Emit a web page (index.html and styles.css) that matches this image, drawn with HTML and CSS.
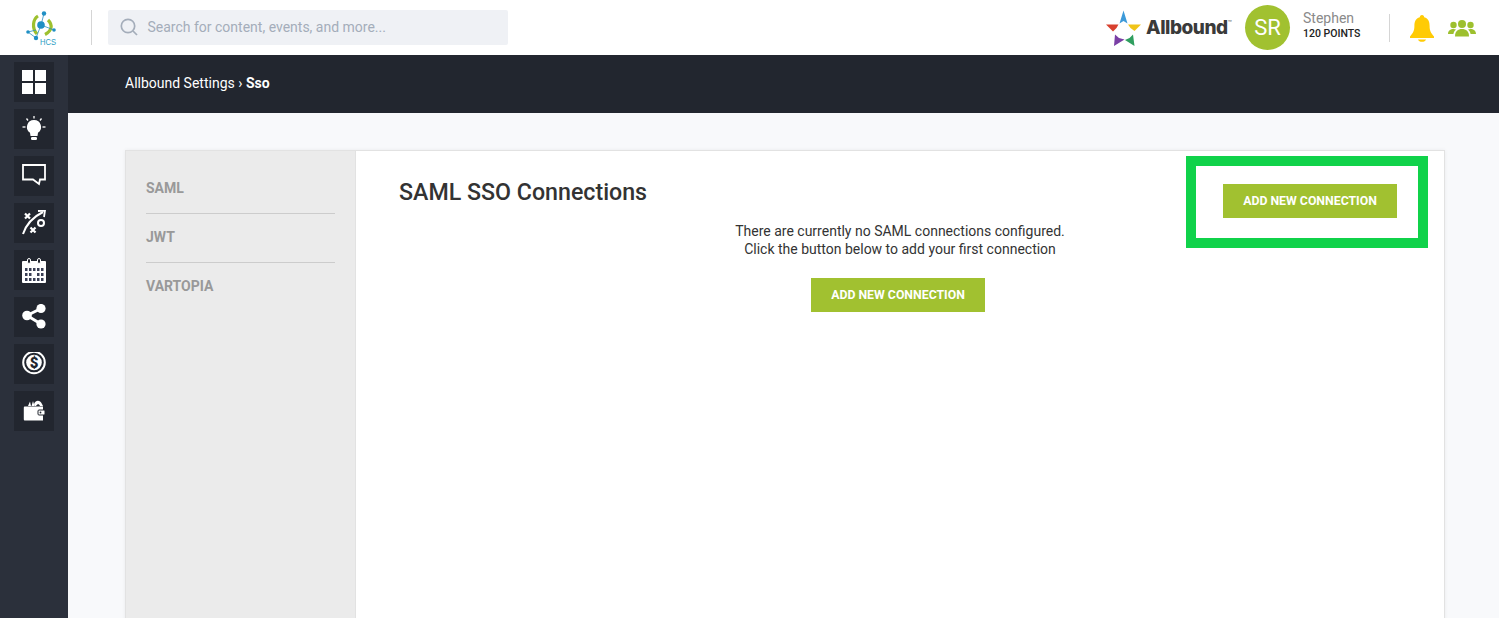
FILE: index.html
```html
<!DOCTYPE html>
<html lang="en">
<head>
<meta charset="utf-8">
<title>Allbound Settings - Sso</title>
<link rel="stylesheet" href="styles.css">
</head>
<body>
<header class="topbar">
  <div class="logo">
    <svg width="36" height="40" viewBox="0 -2 36 40">
      <path d="M13 6 C8 9 6.500 18 12 24" fill="none" stroke="#9dc02e" stroke-width="3.200"/>
      <path d="M23 10 C28 15 27 21 20 24.500" fill="none" stroke="#9dc02e" stroke-width="3.200"/>
      <g stroke="#2a8fc0" stroke-width="0.800" fill="#1f8fc4">
        <line x1="16" y1="15" x2="19" y2="3.500"/><line x1="16" y1="15" x2="29" y2="20"/><line x1="3" y1="22" x2="11" y2="28"/><line x1="11" y1="28" x2="16" y2="15"/><line x1="3" y1="22" x2="11" y2="20"/>
        <circle cx="16" cy="15" r="3.800" stroke="none"/><circle cx="19" cy="3.500" r="2.200" stroke="none"/><circle cx="3" cy="22" r="1.800" stroke="none"/><circle cx="29" cy="20" r="1.800" stroke="none"/><circle cx="11" cy="28" r="2.200" stroke="none"/>
      </g>
      <text x="15" y="35" class="logo-text" textLength="16" lengthAdjust="spacingAndGlyphs">HCS</text>
    </svg>
  </div>
  <div class="divider"></div>
  <div class="search">
    <svg width="20" height="20" viewBox="0 0 20 20" fill="none" stroke="#a4adba" stroke-width="1.700">
      <circle cx="9" cy="9" r="6.700"/><line x1="14" y1="14" x2="18" y2="18"/>
    </svg>
    <span>Search for content, events, and more...</span>
  </div>
  <div class="top-right">
    <div class="brand">
      <svg width="36" height="36" viewBox="0 0 36 36">
        <path d="M17.500 0.500 L21.500 13.500 L17.500 11 L13.500 13.500 Z" fill="#3d9ad9"/>
        <path d="M0 14.500 L12.500 14.500 L10.500 18 L7 21.500 Z" fill="#d8402e"/>
        <path d="M35 14.500 L22 14.500 L24.500 18 L28.500 21 Z" fill="#f0c419"/>
        <path d="M8 36 L9 24.500 L13 28 L18.500 29.500 Z" fill="#7a3fa5"/>
        <path d="M28.500 36 L27 24.500 L23.500 28 L19 30 Z" fill="#2f9e5f"/>
      </svg>
      <span class="brand-name">Allbound</span><span class="tm">™</span>
    </div>
    <div class="avatar">SR</div>
    <div class="user">
      <span class="user-name">Stephen</span>
      <span class="user-points">120 POINTS</span>
    </div>
    <div class="divider divider-short"></div>
    <svg class="bell" width="26" height="28" viewBox="0 0 26 28" fill="#ffcb05">
      <path d="M13 1 C14.500 1 15.200 2 15.200 3.300 C19.500 4.500 20.600 8 20.600 12 C20.600 17 22 19 25 22.500 L25 24 L1 24 L1 22.500 C4 19 5.400 17 5.400 12 C5.400 8 6.500 4.500 10.800 3.300 C10.800 2 11.500 1 13 1 Z"/>
      <path d="M9 25.500 L17 25.500 C16.500 27.300 15 27.800 13 27.800 C11 27.800 9.500 27.300 9 25.500 Z"/>
    </svg>
    <svg class="people" width="28" height="18" viewBox="0 0 28 18" fill="#9dc02e">
      <circle cx="14" cy="5" r="4"/><circle cx="5.500" cy="6" r="3.200"/><circle cx="22.500" cy="6" r="3.200"/>
      <path d="M7 17.500 C7 12 10 10 14 10 C18 10 21 12 21 17.500 Z"/>
      <path d="M0 15 C0 11.500 2.500 10 5.500 10 C6.500 10 7.300 10.200 8 10.500 C6.500 11.800 5.700 13 5.400 15 Z"/>
      <path d="M28 15 C28 11.500 25.500 10 22.500 10 C21.500 10 20.700 10.200 20 10.500 C21.500 11.800 22.300 13 22.600 15 Z"/>
    </svg>
  </div>
</header>

<div class="shell">
  <nav class="rail">
    <a class="tile"><svg width="24" height="24" viewBox="0 0 24 24" fill="#fff"><rect width="11" height="11"/><rect x="13" width="11" height="11"/><rect y="13" width="11" height="11"/><rect x="13" y="13" width="11" height="11"/></svg></a>
    <a class="tile"><svg width="24" height="26" viewBox="0 0 24 26"><path d="M12 4 A7 7 0 0 1 16 16.800 L15.500 20 L8.500 20 L8 16.800 A7 7 0 0 1 12 4 Z" fill="#fff"/><rect x="9" y="21" width="6" height="3" rx="1.200" fill="#fff"/><g stroke="#fff" stroke-width="1.300"><line x1="12" y1="0" x2="12" y2="2.500"/><line x1="4.500" y1="2.500" x2="6" y2="4.500"/><line x1="19.500" y1="2.500" x2="18" y2="4.500"/><line x1="0.500" y1="11" x2="3.500" y2="11"/><line x1="20.500" y1="11" x2="23.500" y2="11"/></g></svg></a>
    <a class="tile"><svg width="24" height="24" viewBox="0 0 24 24" fill="none" stroke="#fff" stroke-width="1.800"><path d="M1 1 H23 V15.500 H18 L17 20 L11 15.500 H1 Z"/></svg></a>
    <a class="tile"><svg width="24" height="26" viewBox="0 0 24 26" fill="none" stroke="#fff" stroke-width="2"><path d="M1 24 C4 15 11 7 21 2"/><path d="M16 1 L23 0.500 L22 7" stroke-width="1.800"/><circle cx="19" cy="13" r="3"/><path d="M3 3.500 L8 8.500 M8 3.500 L3 8.500 M8.500 17.500 L13.500 22.500 M13.500 17.500 L8.500 22.500" stroke-width="2.200"/></svg></a>
    <a class="tile"><svg width="24" height="25" viewBox="0 0 24 25"><rect y="3" width="24" height="22" rx="1" fill="#fff"/><g fill="#3a3f55"><rect x="3" y="10" width="2.500" height="3"/><rect x="7" y="10" width="2.500" height="3"/><rect x="11" y="10" width="2.500" height="3"/><rect x="15" y="10" width="2.500" height="3"/><rect x="19" y="10" width="2.500" height="3"/><rect x="3" y="15" width="2.500" height="3"/><rect x="7" y="15" width="2.500" height="3"/><rect x="15" y="15" width="2.500" height="3"/><rect x="19" y="15" width="2.500" height="3"/><rect x="3" y="20" width="2.500" height="3"/><rect x="7" y="20" width="2.500" height="3"/><rect x="11" y="20" width="2.500" height="3"/><rect x="15" y="20" width="2.500" height="3"/><rect x="19" y="20" width="2.500" height="3"/></g><g fill="#22262f" stroke="#fff" stroke-width="1"><rect x="5.500" y="0.500" width="3" height="5" rx="1.500"/><rect x="15.500" y="0.500" width="3" height="5" rx="1.500"/></g></svg></a>
    <a class="tile"><svg width="24" height="26" viewBox="0 0 24 26" fill="#fff"><circle cx="5" cy="11.500" r="4.800"/><circle cx="19" cy="4.500" r="4.600"/><circle cx="19" cy="20" r="4.600"/><path d="M5 11.500 L19 4.500 M5 11.500 L19 20" stroke="#fff" stroke-width="3"/></svg></a>
    <a class="tile"><svg width="24" height="24" viewBox="0 0 24 24" fill="none"><circle cx="12" cy="10.500" r="10.800" stroke="#fff" stroke-width="2"/><circle cx="12" cy="10.500" r="7.800" fill="#fff"/><text x="12" y="15.800" class="dollar">$</text></svg></a>
    <a class="tile"><svg width="22" height="22" viewBox="0 0 22 22"><path d="M5 6 L7 1.500 L8 6 Z M8.500 6 L10 1 L11.500 6 Z" fill="#fff"/><path d="M11 4 C13 -0.500 17 0 19 4 L20 6 L17 6 C16 3.500 14.500 3.500 13 6 L11.500 6 Z" fill="#fff"/><path d="M2 6.500 H20 V20.500 H2 C1.200 20.500 0.800 20 0.800 19.200 V7.800 C0.800 7 1.200 6.500 2 6.500 Z" fill="#fff"/><rect x="15" y="10" width="7" height="5" rx="1" fill="#fff" stroke="#22262f" stroke-width="1"/><circle cx="17.500" cy="12.500" r="0.900" fill="#22262f"/></svg></a>
  </nav>

  <main class="main">
    <div class="crumbs">Allbound Settings › <strong>Sso</strong></div>
    <div class="page">
      <section class="card">
        <aside class="tabs">
          <a class="tab">SAML</a>
          <a class="tab">JWT</a>
          <a class="tab">VARTOPIA</a>
        </aside>
        <div class="panel">
          <div class="panel-head">
            <h1>SAML SSO Connections</h1>
            <button class="btn" type="button">ADD NEW CONNECTION</button>
          </div>
          <div class="empty">
            <p>There are currently no SAML connections configured.<br>Click the button below to add your first connection</p>
            <button class="btn" type="button">ADD NEW CONNECTION</button>
          </div>
          <div class="highlight"></div>
        </div>
      </section>
    </div>
  </main>
</div>
</body>
</html>
```

FILE: styles.css
```css
* { box-sizing: border-box; }
html, body { margin: 0; height: 100%; overflow: hidden; }
body { font-family: Roboto, "Liberation Sans", sans-serif; background: #f8f9fb; color: #333; }

.topbar { height: 55px; background: #fff; display: flex; align-items: center; padding-left: 25px; }
.logo { width: 36px; height: 40px; margin-right: 30px; }
.logo svg { display: block; }
.logo-text { font-family: "Liberation Sans", sans-serif; font-size: 9.500px; fill: #2a9dc4; }
.divider { width: 1px; height: 35px; background: #d5d5d5; flex: none; }
.search { width: 400px; height: 35px; margin-left: 16px; background: #eff1f5; border-radius: 2px; display: flex; align-items: center; gap: 8.500px; padding: 0 0 2px 11px; color: #a4adba; font-size: 14px; }
.top-right { margin-left: auto; display: flex; align-items: center; padding-right: 23px; }
.brand { display: flex; align-items: center; margin-right: 13px; }
.brand svg { margin-right: 4px; }
.brand-name { font-family: Inter, "Liberation Sans", sans-serif; font-weight: 800; font-size: 19px; letter-spacing: -0.500px; color: #3a3a3a; }
.tm { font-size: 7px; color: #555; align-self: flex-start; margin-top: 9px; }
.avatar { width: 45px; height: 45px; border-radius: 50%; background: #a1c130; color: #fff; font-size: 22px; display: flex; align-items: center; justify-content: center; margin-right: 13px; }
.user { width: 86px; display: flex; flex-direction: column; margin-top: -6px; }
.user-name { font-size: 14px; line-height: 17px; color: #8a8a8a; }
.user-points { font-size: 10.500px; line-height: 13px; font-weight: 500; color: #222; }
.divider-short { height: 28px; }
.bell { margin-left: 19px; }
.people { margin-left: 13px; }

.shell { display: flex; height: 563px; }
.rail { width: 68px; flex: none; background: #2b303b; padding: 7px 0 0 14px; display: flex; flex-direction: column; gap: 7px; }
.tile { width: 40px; height: 40px; background: #22262f; display: flex; align-items: center; justify-content: center; }
.dollar { font-family: Roboto, sans-serif; font-size: 15px; font-weight: 900; fill: #22262f; text-anchor: middle; }

.main { flex: 1; min-width: 0; display: flex; flex-direction: column; }
.crumbs { height: 58px; flex: none; background: #22262f; color: #fff; font-size: 14px; display: flex; align-items: center; padding: 0 0 2px 57px; white-space: pre; }
.crumbs strong { font-weight: 700; }
.page { flex: 1; padding: 37px 54px 0 57px; min-height: 0; }
.card { height: 100%; min-height: 480px; display: flex; background: #fff; border: 1px solid #e2e2e2; border-bottom: 0; box-shadow: 0 0 4px rgba(0,0,0,.06); }
.tabs { width: 230px; flex: none; background: #ebebeb; border-right: 1px solid #e2e2e2; padding: 14px 20px 0; display: flex; flex-direction: column; }
.tab { height: 49px; padding-top: 13px; font-size: 14px; line-height: 20px; font-weight: 700; color: #999; border-bottom: 1px solid #ccc; }
.tab:last-child { border-bottom: 0; }

.panel { flex: 1; position: relative; padding: 0 47px 0 43px; }
.panel-head { display: flex; justify-content: space-between; align-items: flex-start; padding-top: 33px; }
h1 { margin: 0; font-size: 23.200px; line-height: 17px; font-weight: 500; color: #333; }
.btn { width: 174px; height: 34px; background: #a1c130; color: #fff; border: 0; border-radius: 0; padding: 0 0 1px; font-family: Roboto, sans-serif; font-size: 12.300px; font-weight: 700; }
.empty { margin-top: 4px; text-align: center; }
.empty p { margin: 0 0 20px; padding-left: 4px; font-size: 14px; line-height: 18px; color: #333; }
.highlight { position: absolute; left: 830px; top: 5px; width: 242px; height: 92px; border: 10px solid #10d24a; }
```
